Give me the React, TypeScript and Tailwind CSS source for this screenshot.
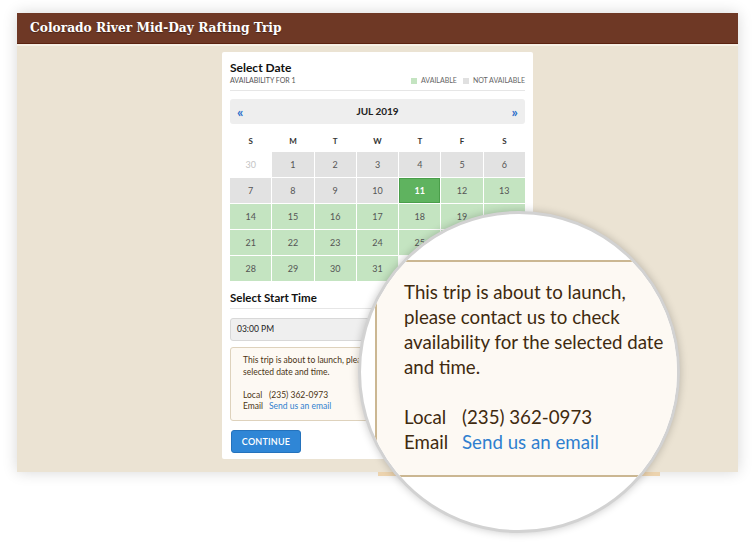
import React from "react";

const lato = { fontFamily: "Lato, 'Noto Sans', sans-serif" };

type Cell = { n: number | null; kind: "prev" | "na" | "sel" | "av" | "empty" };

const rows: Cell[][] = [
  [
    { n: 30, kind: "prev" },
    { n: 1, kind: "na" },
    { n: 2, kind: "na" },
    { n: 3, kind: "na" },
    { n: 4, kind: "na" },
    { n: 5, kind: "na" },
    { n: 6, kind: "na" },
  ],
  [
    { n: 7, kind: "na" },
    { n: 8, kind: "na" },
    { n: 9, kind: "na" },
    { n: 10, kind: "na" },
    { n: 11, kind: "sel" },
    { n: 12, kind: "av" },
    { n: 13, kind: "av" },
  ],
  [14, 15, 16, 17, 18, 19, 20].map((n) => ({ n, kind: "av" as const })),
  [21, 22, 23, 24, 25, 26, 27].map((n) => ({ n, kind: "av" as const })),
  [
    { n: 28, kind: "av" },
    { n: 29, kind: "av" },
    { n: 30, kind: "av" },
    { n: 31, kind: "av" },
    { n: null, kind: "empty" },
    { n: null, kind: "empty" },
    { n: null, kind: "empty" },
  ],
];

function DayCell({ c }: { c: Cell }) {
  const base = "h-[25px] flex items-center justify-center text-[9px]";
  if (c.kind === "prev")
    return <div className={`${base} bg-white text-[#c4c4c4]`}>{c.n}</div>;
  if (c.kind === "na")
    return <div className={`${base} bg-[#e2e2e2] text-[#555]`}>{c.n}</div>;
  if (c.kind === "sel")
    return (
      <div className={`${base} bg-[#5fb35f] border border-[#4a9e4a] text-white font-bold`}>
        {c.n}
      </div>
    );
  if (c.kind === "av")
    return <div className={`${base} bg-[#c4e4c1] text-[#555]`}>{c.n}</div>;
  return <div className={`${base} bg-white`} />;
}

export default function App() {
  return (
    <div className="relative w-[755px] h-[547px] bg-white overflow-hidden" style={lato}>
      <div className="pt-[13px] pl-[17px]">
        <div className="w-[721px] h-[459px] bg-[#ebe3d3] shadow-[0_0_14px_rgba(0,0,0,0.16)] flex flex-col">
          {/* header */}
          <div className="h-[31px] bg-[#6e3825] flex items-center pl-[13px] border-b border-[#5a2210]">
            <span
              className="text-white font-bold text-[13.6px] leading-none [text-shadow:0_1px_1px_rgba(0,0,0,0.35)]"
              style={{ fontFamily: "'DejaVu Serif Condensed', 'DejaVu Serif', serif" }}
            >
              Colorado River Mid-Day Rafting Trip
            </span>
          </div>
          <div className="h-[2px] bg-[#f6f0e5]" />

          {/* card */}
          <div className="flex justify-center mt-[6px]">
            <div className="w-[311px] h-[407px] bg-white rounded-[2px] px-[8px] pt-[9px]">
              <div className="text-[12px] font-bold text-[#111] leading-[14px]">Select Date</div>
              <div className="flex items-center justify-between mt-[1px] pb-[5px] border-b border-[#e6e6e6]">
                <span className="text-[7px] text-[#555] leading-[9px]">AVAILABILITY FOR 1</span>
                <div className="flex items-center gap-[4px] text-[7px] text-[#666] leading-[9px]">
                  <span className="w-[6px] h-[6px] bg-[#c4e4c1] inline-block" />
                  <span>AVAILABLE</span>
                  <span className="w-[6px] h-[6px] bg-[#e0e0e0] inline-block ml-[2px]" />
                  <span>NOT AVAILABLE</span>
                </div>
              </div>

              {/* month header */}
              <div className="mt-[8px] h-[25px] bg-[#eeeeee] rounded-[3px] flex items-center justify-between px-[7px]">
                <span className="text-[#2b6fca] text-[14px] font-bold leading-none">«</span>
                <span className="text-[10px] font-bold text-[#222]">JUL 2019</span>
                <span className="text-[#2b6fca] text-[14px] font-bold leading-none">»</span>
              </div>

              {/* day names */}
              <div className="grid grid-cols-7 gap-px mt-[12px] mb-[6px]">
                {["S", "M", "T", "W", "T", "F", "S"].map((d, i) => (
                  <div key={i} className="text-center text-[8px] font-bold text-[#333] leading-[10px]">
                    {d}
                  </div>
                ))}
              </div>

              {/* grid */}
              <div className="grid grid-cols-7 gap-px">
                {rows.flat().map((c, i) => (
                  <DayCell key={i} c={c} />
                ))}
              </div>

              {/* start time */}
              <div className="mt-[10px] pb-[3px] border-b border-[#e6e6e6] text-[11.5px] font-bold text-[#111] leading-[14px]">
                Select Start Time
              </div>
              <div className="mt-[9px] h-[23px] bg-[#efefef] border border-[#d8d8d8] rounded-[3px] flex items-center px-[6px] text-[8.5px] text-[#222]">
                03:00 PM
              </div>

              {/* notice */}
              <div className="mt-[6px] h-[74px] bg-[#fdf9f3] border border-[#ded2bc] rounded-[3px] pl-[12px] pr-[6px] pt-[7px] text-[8.5px] leading-[11.5px] text-[#4a3413]">
                <p>
                  This trip is about to launch, please contact us to check availability for the
                  selected date and time.
                </p>
                <div className="mt-[11.5px] flex">
                  <span className="w-[26px]">Local</span>
                  <span>(235) 362-0973</span>
                </div>
                <div className="flex">
                  <span className="w-[26px]">Email</span>
                  <span className="text-[#2f7fcf]">Send us an email</span>
                </div>
              </div>

              <button className="mt-[9px] ml-px h-[23px] w-[70px] bg-[#2f86d6] border border-[#2472bc] rounded-[3px] text-white text-[9px] font-semibold tracking-[0.2px]">
                CONTINUE
              </button>
            </div>
          </div>
        </div>
      </div>

      {/* strip under frame */}
      <div className="absolute left-[378px] top-[472px] w-[282px] h-[4px] bg-[#ecd3ae]" />

      {/* magnifier */}
      <div className="absolute left-[358px] top-[211px] w-[322px] h-[322px] rounded-full overflow-hidden bg-white border-[3px] border-[#d2d2d2] shadow-[0_0_8px_rgba(0,0,0,0.22)]">
        <div className="mt-[46px] ml-[14px] w-[400px] bg-[#fdf9f3] border-t-2 border-b-2 border-l-2 border-[#cbb792] pl-[27px] pt-[18px] pb-[20px] text-[18.7px] leading-[25px] text-[#3f2a0f] whitespace-nowrap">
          <p>
            This trip is about to launch,
            <br />
            please contact us to check
            <br />
            availability for the selected date
            <br />
            and time.
          </p>
          <div className="mt-[25px] flex">
            <span className="w-[58px]">Local</span>
            <span>(235) 362-0973</span>
          </div>
          <div className="flex">
            <span className="w-[58px]">Email</span>
            <span className="text-[#2f7fcf]">Send us an email</span>
          </div>
        </div>
      </div>
    </div>
  );
}
